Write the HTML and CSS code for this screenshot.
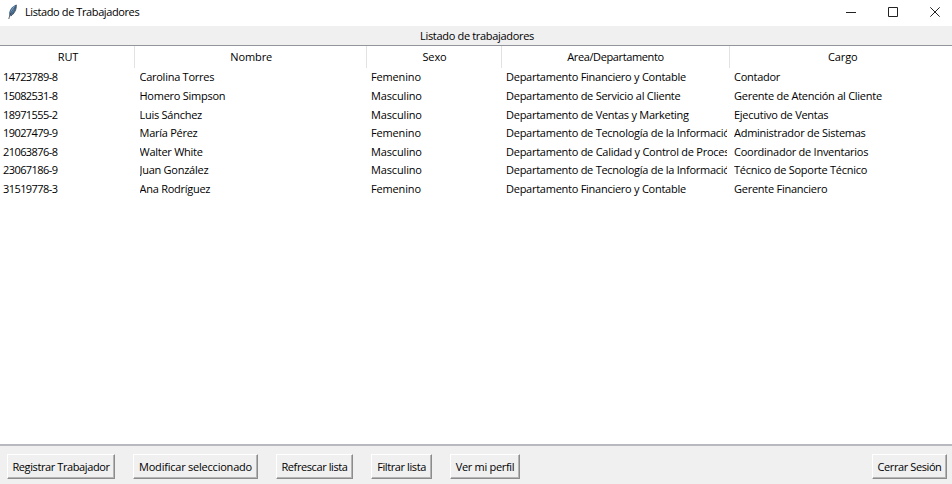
FILE: index.html
```html
<!DOCTYPE html>
<html lang="es">
<head>
<meta charset="utf-8">
<title>Listado de Trabajadores</title>
<link rel="stylesheet" href="styles.css">
</head>
<body>
<div class="window">
  <header class="titlebar">
    <svg class="feather" viewBox="0 0 12 18" width="12" height="18">
      <path d="M9.300 1.800C6.500 2.500 3.200 5.500 2.300 9.200c-.3 1.500 0 2.700.5 3.900C6.300 11.800 9.600 7.500 9.300 1.800z" fill="#42698f"/>
      <path d="M7.800 3C5.500 4.500 3.600 7.500 3.200 11 5.500 9 7.500 6 7.800 3z" fill="#8db5d8"/>
      <path d="M9.300 1.800c.4 4.500-2 9-5.500 11.300M1.800 16C2.500 12 4.800 7.500 7.800 4.300" fill="none" stroke="#333c46" stroke-width=".8"/>
    </svg>
    <h1 class="title">Listado de Trabajadores</h1>
    <div class="controls">
      <svg viewBox="0 0 10 10" width="10" height="10"><path d="M0 5.500h10"/></svg>
      <svg viewBox="0 0 10 10" width="10" height="10"><path d="M.5 .5h9v9h-9z"/></svg>
      <svg viewBox="0 0 10 10" width="10" height="10"><path d="M.3 .3l9.400 9.400M9.700 .3L.3 9.700"/></svg>
    </div>
  </header>
  <div class="caption">Listado de trabajadores</div>
  <main class="list">
    <div class="row head"><span>RUT</span><span>Nombre</span><span>Sexo</span><span class="area">Area/Departamento</span><span>Cargo</span></div>
    <div class="row"><span class="rut">14723789-8</span><span>Carolina Torres</span><span class="sex">Femenino</span><span>Departamento Financiero y Contable</span><span>Contador</span></div>
    <div class="row"><span class="rut">15082531-8</span><span>Homero Simpson</span><span class="sex">Masculino</span><span>Departamento de Servicio al Cliente</span><span>Gerente de Atención al Cliente</span></div>
    <div class="row"><span class="rut">18971555-2</span><span>Luis Sánchez</span><span class="sex">Masculino</span><span>Departamento de Ventas y Marketing</span><span>Ejecutivo de Ventas</span></div>
    <div class="row"><span class="rut">19027479-9</span><span>María Pérez</span><span class="sex">Femenino</span><span>Departamento de Tecnología de la Información</span><span>Administrador de Sistemas</span></div>
    <div class="row"><span class="rut">21063876-8</span><span>Walter White</span><span class="sex">Masculino</span><span>Departamento de Calidad y Control de Procesos</span><span>Coordinador de Inventarios</span></div>
    <div class="row"><span class="rut">23067186-9</span><span>Juan González</span><span class="sex">Masculino</span><span>Departamento de Tecnología de la Información</span><span>Técnico de Soporte Técnico</span></div>
    <div class="row"><span class="rut">31519778-3</span><span>Ana Rodríguez</span><span class="sex">Femenino</span><span>Departamento Financiero y Contable</span><span>Gerente Financiero</span></div>
  </main>
  <footer class="actions">
    <button class="w-register">Registrar Trabajador</button>
    <button class="w-modify">Modificar seleccionado</button>
    <button class="w-refresh">Refrescar lista</button>
    <button class="w-filter">Filtrar lista</button>
    <button class="w-profile">Ver mi perfil</button>
    <button class="w-logout">Cerrar Sesión</button>
  </footer>
</div>
</body>
</html>
```
FILE: styles.css
```css
* { box-sizing: border-box; }
body {
  margin: 0;
  font-family: "Open Sans", "Noto Sans", sans-serif;
  font-size: 11px;
  letter-spacing: -0.260px;
  color: #000;
  background: #fff;
}
.window { width: 952px; height: 484px; display: flex; flex-direction: column; overflow: hidden; }
.titlebar { height: 26px; flex: none; display: flex; align-items: center; padding: 0 12px 3px 7px; }
.feather { flex: none; margin-right: 6px; }
.title { margin: 0; font-size: 11px; font-weight: 400; line-height: 16px; padding-top: 1px; letter-spacing: -0.400px; }
.controls { margin-left: auto; display: flex; gap: 32px; }
.controls svg { fill: none; stroke: #222; stroke-width: 1; }
.caption {
  height: 20px;
  flex: none;
  background: #f0f0f0;
  border-bottom: 1px solid #92959c;
  text-align: center;
  line-height: 20px;
  padding-left: 2px;
  letter-spacing: -0.320px;
}
.list { flex: 1; min-height: 0; }
.row { display: grid; grid-template-columns: 135px 231.500px 135px 228px 222.500px; height: 18.550px; line-height: 18.550px; }
.row span { margin: 0 3px 0 4.500px; overflow: hidden; white-space: nowrap; }
.row .rut { margin-left: 3px; letter-spacing: -0.580px; }
.row .sex { letter-spacing: -0.150px; }
.row.head { height: 22.450px; line-height: 22px; text-align: center; }
.head span { margin: 0; padding-left: 2px; letter-spacing: -0.100px; border-right: 1px solid #e2e2e2; }
.head .area { letter-spacing: -0.380px; padding-left: 1px; }
.head span:last-child { border-right: 0; padding-left: 4px; }
.actions {
  height: 40px;
  flex: none;
  display: flex;
  align-items: flex-start;
  gap: 18px;
  padding: 8px 5px 0 7px;
  background: #f0f0f0;
  border-top: 2px solid #b9b9c0;
}
button {
  height: 25px;
  padding: 0;
  font: inherit;
  letter-spacing: -0.400px;
  color: inherit;
  white-space: nowrap;
  background: #f0f0f0;
  border: 1px solid;
  border-color: #fff #8c8c8c #8c8c8c #fff;
  box-shadow: inset -1px -1px #b5b5b5;
}
.w-register { width: 108px; }
.w-modify { width: 125px; letter-spacing: -0.220px; }
.w-refresh { width: 77px; }
.w-filter { width: 61px; }
.w-profile { width: 70px; letter-spacing: -0.300px; }
.w-logout { width: 75px; margin-left: auto; }
```
